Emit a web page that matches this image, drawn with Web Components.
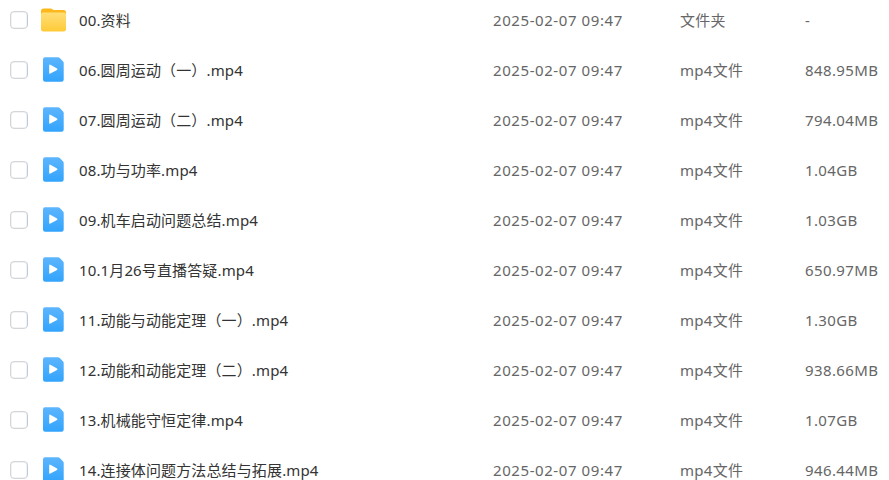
<!DOCTYPE html>
<html lang="zh-CN"><head><meta charset="utf-8"><title>文件列表</title>
<style>html,body{margin:0;background:#fff;height:480px;overflow:hidden}</style></head><body>
<file-list></file-list>
<script>
class FileIcon extends HTMLElement{
  connectedCallback(){
    const folder=this.getAttribute('kind')==='folder';
    this.attachShadow({mode:'open'}).innerHTML=`<style>:host{display:block;width:28px;height:28px}svg{display:block}</style>`+(folder?
    `<svg width="28" height="28" viewBox="0 0 28 28"><defs><linearGradient id="g" x2="0" y2="1"><stop stop-color="#ffdf78"/><stop offset="1" stop-color="#ffca38"/></linearGradient></defs>
    <path d="M1 5.2Q1 2.5 3.7 2.5H10.5Q11.8 2.5 12.6 3.2L13.4 3.9H23.5Q26 3.9 26 6.2V15H1Z" fill="#fdb91c"/>
    <path d="M1 8.4Q1 6.4 3 6.4H24Q26 6.4 26 8.4V23Q26 25.5 23.5 25.5H3.5Q1 25.5 1 23Z" fill="url(#g)"/></svg>`:
    `<svg width="28" height="28" viewBox="0 0 28 28"><defs><linearGradient id="g" x2="0" y2="1"><stop stop-color="#5db5ff"/><stop offset="1" stop-color="#32a4fc"/></linearGradient></defs>
    <path d="M5 1.3H18Q19 1.3 19.8 2.1L22.9 5.2Q23.7 6 23.7 7V23.5Q23.7 25.7 21.5 25.7H5.2Q3 25.7 3 23.5V3.5Q3 1.3 5 1.3Z" fill="url(#g)"/>
    <path d="M9.2 9.5Q9.2 8.2 10.4 8.8L17 12.5Q18 13.2 17 13.9L10.4 17.6Q9.2 18.2 9.2 17Z" fill="#fff"/></svg>`);
  }
}
customElements.define('file-icon',FileIcon);
class SelectBox extends HTMLElement{
  connectedCallback(){this.attachShadow({mode:'open'}).innerHTML=`<style>:host{display:block;box-sizing:border-box;width:18px;height:18px;border:1px solid #d3d5d8;border-right-color:#bccbd8;border-radius:4.5px;background:#fff;box-shadow:inset 0 0 0 .5px #e6e7e9}</style>`}
}
customElements.define('select-box',SelectBox);
class FileRow extends HTMLElement{
  connectedCallback(){
    this.attachShadow({mode:'open'}).innerHTML=`<style>
    :host{display:grid;grid-template-columns:30px 39px 414px 187px 125px 84px;align-items:center;height:50px;padding-left:10px;box-sizing:border-box;
      font:15px/20px "Noto Sans","Noto Sans CJK SC",sans-serif;color:#666;white-space:nowrap}
    select-box,file-icon{margin-bottom:10px}
    .name{color:#333;letter-spacing:.13px}.date{letter-spacing:.58px}.type{letter-spacing:.3px}.size{letter-spacing:.38px}
    .cell{padding-bottom:11px}</style>
    <select-box></select-box><file-icon kind="${this.getAttribute('kind')}"></file-icon>
    <div class="cell name"><slot name="name"></slot></div><div class="cell date"><slot name="date"></slot></div>
    <div class="cell type"><slot name="type"></slot></div><div class="cell size"><slot name="size"></slot></div>`;
  }
}
customElements.define('file-row',FileRow);
class FileList extends HTMLElement{
  connectedCallback(){
    const files=[['00.资料','-'],['06.圆周运动（一）.mp4','848.95MB'],['07.圆周运动（二）.mp4','794.04MB'],['08.功与功率.mp4','1.04GB'],['09.机车启动问题总结.mp4','1.03GB'],['10.1月26号直播答疑.mp4','650.97MB'],['11.动能与动能定理（一）.mp4','1.30GB'],['12.动能和动能定理（二）.mp4','938.66MB'],['13.机械能守恒定律.mp4','1.07GB'],['14.连接体问题方法总结与拓展.mp4','946.44MB']];
    this.attachShadow({mode:'open'}).innerHTML=`<style>:host{display:block;height:480px;overflow:hidden}</style>`+files.map(([n,s],i)=>
    `<file-row kind="${i?'video':'folder'}"><span slot="name">${n}</span><span slot="date">2025-02-07 09:47</span><span slot="type">${i?'mp4文件':'文件夹'}</span><span slot="size">${s}</span></file-row>`).join('');
  }
}
customElements.define('file-list',FileList);
</script></body></html>
